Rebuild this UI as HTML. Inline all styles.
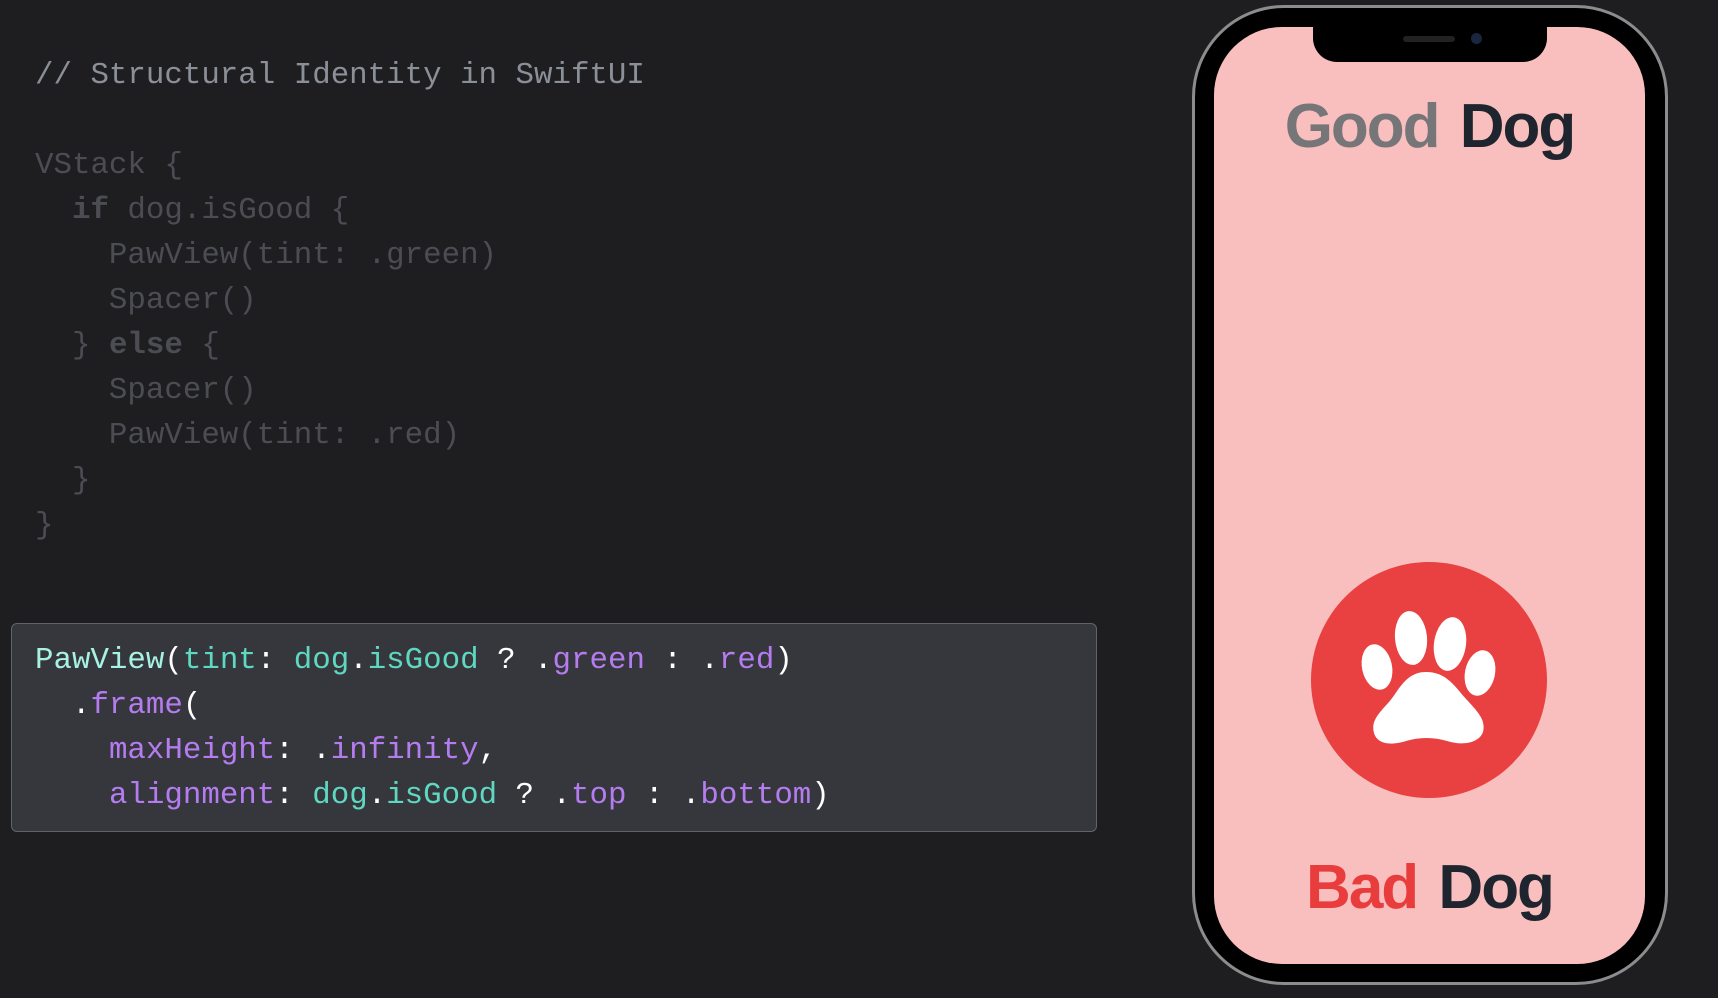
<!DOCTYPE html>
<html><head><meta charset="utf-8"><style>
*{margin:0;padding:0;box-sizing:border-box}
body{width:1718px;height:998px;background:#1e1e21;overflow:hidden;position:relative;font-family:"Liberation Mono",monospace}
.l{position:absolute;left:35px;font-size:30.8px;line-height:45px;white-space:pre;color:#4b4d53}
.c{color:#8b8f97}
b{font-weight:bold}
.box{position:absolute;left:11px;top:623px;width:1086px;height:209px;background:#35373d;border:1px solid #60636a;border-radius:6px}
.w{color:#fff}.t{color:#a7f2e3}.g{color:#5fd8c1}.p{color:#b57cf0}
.phone{position:absolute;left:1192px;top:5px;width:476px;height:980px;border-radius:92px;background:#000;border:3px solid #8c8c8e}
.screen{position:absolute;left:1214px;top:27px;width:431px;height:937px;border-radius:68px;background:#f9bfbe;overflow:hidden}
.notch{position:absolute;left:99px;top:-2px;width:234px;height:37px;background:#000;border-radius:0 0 24px 24px}
.h{position:absolute;left:0;width:431px;text-align:center;font-family:"Liberation Sans",sans-serif;font-weight:bold;font-size:62px;letter-spacing:-2px;word-spacing:6px;color:#1f252e}
</style></head><body>
<div class="l c" style="top:53px">// Structural Identity in SwiftUI</div>
<div class="l" style="top:143px">VStack {</div>
<div class="l" style="top:188px">  <b>if</b> dog.isGood {</div>
<div class="l" style="top:233px">    PawView(tint: .green)</div>
<div class="l" style="top:278px">    Spacer()</div>
<div class="l" style="top:323px">  } <b>else</b> {</div>
<div class="l" style="top:368px">    Spacer()</div>
<div class="l" style="top:413px">    PawView(tint: .red)</div>
<div class="l" style="top:458px">  }</div>
<div class="l" style="top:503px">}</div>
<div class="box"></div>
<div class="l w" style="top:638px"><span class="t">PawView</span>(<span class="g">tint</span>: <span class="g">dog</span>.<span class="g">isGood</span> ? .<span class="p">green</span> : .<span class="p">red</span>)</div>
<div class="l w" style="top:683px">  .<span class="p">frame</span>(</div>
<div class="l w" style="top:728px">    <span class="p">maxHeight</span>: .<span class="p">infinity</span>,</div>
<div class="l w" style="top:773px">    <span class="p">alignment</span>: <span class="g">dog</span>.<span class="g">isGood</span> ? .<span class="p">top</span> : .<span class="p">bottom</span>)</div>
<div class="phone"></div>
<div class="screen">
<div class="notch"><div style="position:absolute;left:90px;top:11px;width:52px;height:6px;border-radius:3px;background:#222"></div><div style="position:absolute;left:158px;top:8px;width:11px;height:11px;border-radius:50%;background:#1a2540"></div></div>
<div class="h" style="top:64px"><span style="color:#767679">Good</span> Dog</div>
<svg style="position:absolute;left:85px;top:523px" width="260" height="260" viewBox="0 0 260 260">
<circle cx="130" cy="130" r="118" fill="#e94141"/>
<ellipse cx="112" cy="88" rx="16" ry="27" fill="#fff" transform="rotate(-5 112 88)"/>
<ellipse cx="151" cy="94" rx="16" ry="27" fill="#fff" transform="rotate(8 151 94)"/>
<ellipse cx="78" cy="117" rx="15" ry="23" fill="#fff" transform="rotate(-12 78 117)"/>
<ellipse cx="181" cy="123" rx="15" ry="23" fill="#fff" transform="rotate(12 181 123)"/>
<path d="M127 122 C107 122 100 140 90 152 C78 165 72 172 75 183 C78 194 92 196 107 191 C120 187 135 187 148 191 C164 196 180 193 184 182 C187 170 179 162 168 150 C156 137 148 122 127 122Z" fill="#fff"/>
</svg>
<div class="h" style="top:825px"><span style="color:#e93c3c">Bad</span> Dog</div>
</div>
</body></html>
